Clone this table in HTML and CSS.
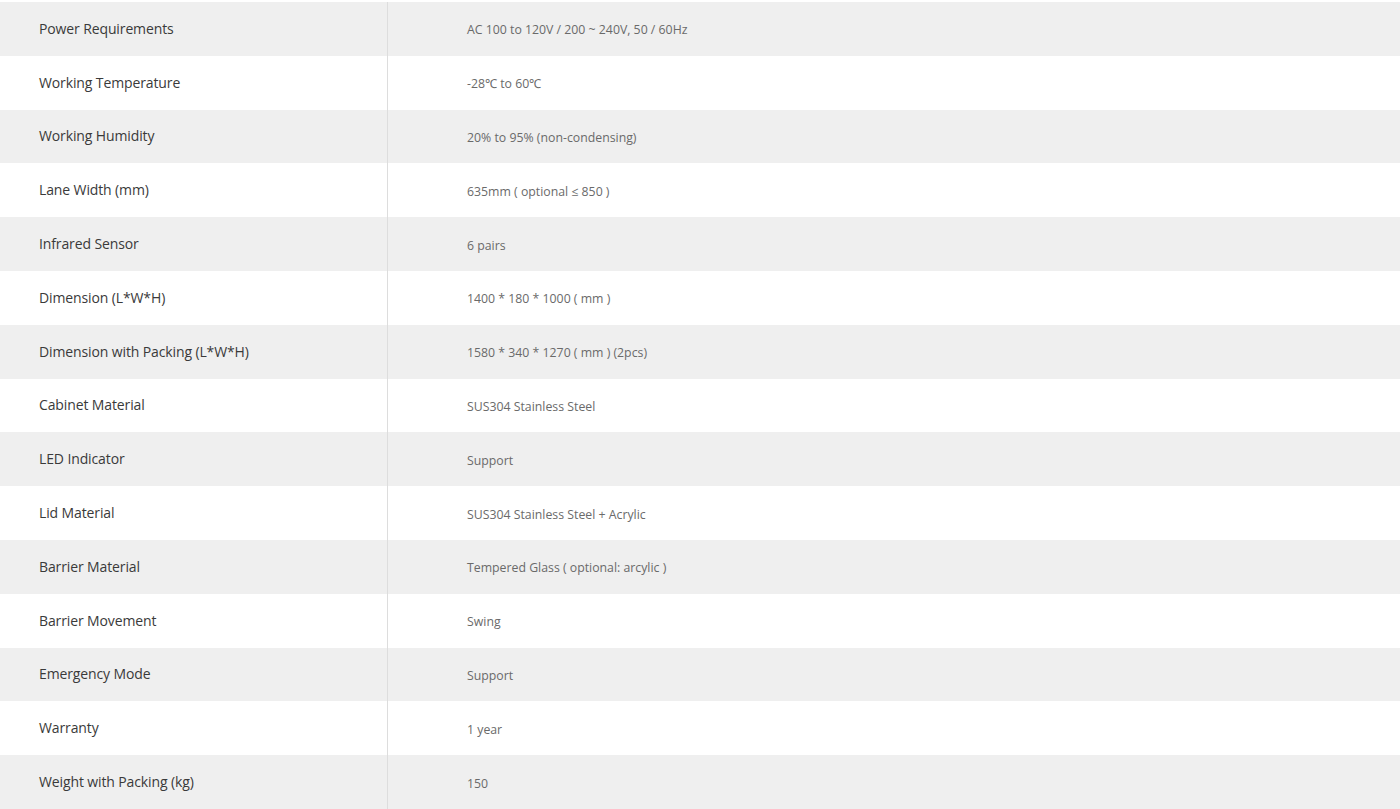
FILE: index.html
```html
<!DOCTYPE html>
<html>
<head>
<meta charset="utf-8">
<link rel="stylesheet" href="styles.css">
</head>
<body>
<table class="spec">
<tbody>
<tr><td class="k">Power Requirements</td><td class="v">AC 100 to 120V / 200 ~ 240V, 50 / 60Hz</td></tr>
<tr><td class="k">Working Temperature</td><td class="v">-28℃ to 60℃</td></tr>
<tr><td class="k">Working Humidity</td><td class="v">20% to 95% (non-condensing)</td></tr>
<tr><td class="k">Lane Width (mm)</td><td class="v">635mm ( optional ≤ 850 )</td></tr>
<tr><td class="k">Infrared Sensor</td><td class="v">6 pairs</td></tr>
<tr><td class="k">Dimension (L*W*H)</td><td class="v">1400 * 180 * 1000 ( mm )</td></tr>
<tr><td class="k">Dimension with Packing (L*W*H)</td><td class="v">1580 * 340 * 1270 ( mm ) (2pcs)</td></tr>
<tr><td class="k">Cabinet Material</td><td class="v">SUS304 Stainless Steel</td></tr>
<tr><td class="k">LED Indicator</td><td class="v">Support</td></tr>
<tr><td class="k">Lid Material</td><td class="v">SUS304 Stainless Steel + Acrylic</td></tr>
<tr><td class="k">Barrier Material</td><td class="v">Tempered Glass ( optional: arcylic )</td></tr>
<tr><td class="k">Barrier Movement</td><td class="v">Swing</td></tr>
<tr><td class="k">Emergency Mode</td><td class="v">Support</td></tr>
<tr><td class="k">Warranty</td><td class="v">1 year</td></tr>
<tr><td class="k">Weight with Packing (kg)</td><td class="v">150</td></tr>
</tbody>
</table>
</body>
</html>
```
FILE: styles.css
```css
html, body {
  margin: 0;
  padding: 0;
  background: #ffffff;
}
body {
  padding-top: 2px;
  font-family: "Open Sans", "Liberation Sans", sans-serif;
}
.spec {
  width: 100%;
  border-collapse: collapse;
  table-layout: fixed;
}
.spec tr {
  height: 53.8px;
}
.spec tr:nth-child(odd) {
  background: #efefef;
}
.spec td {
  padding: 0;
  vertical-align: middle;
}
.spec .k {
  width: 348px;
  padding-left: 39px;
  border-right: 1px solid #dddddd;
  font-size: 14px;
  color: #3a3a3a;
  letter-spacing: -0.12px;
  padding-bottom: 1px;
}
.spec .v {
  padding-left: 79px;
  font-size: 12.3px;
  color: #6a6a6a;
  letter-spacing: 0;
  padding-top: 2px;
}
```
